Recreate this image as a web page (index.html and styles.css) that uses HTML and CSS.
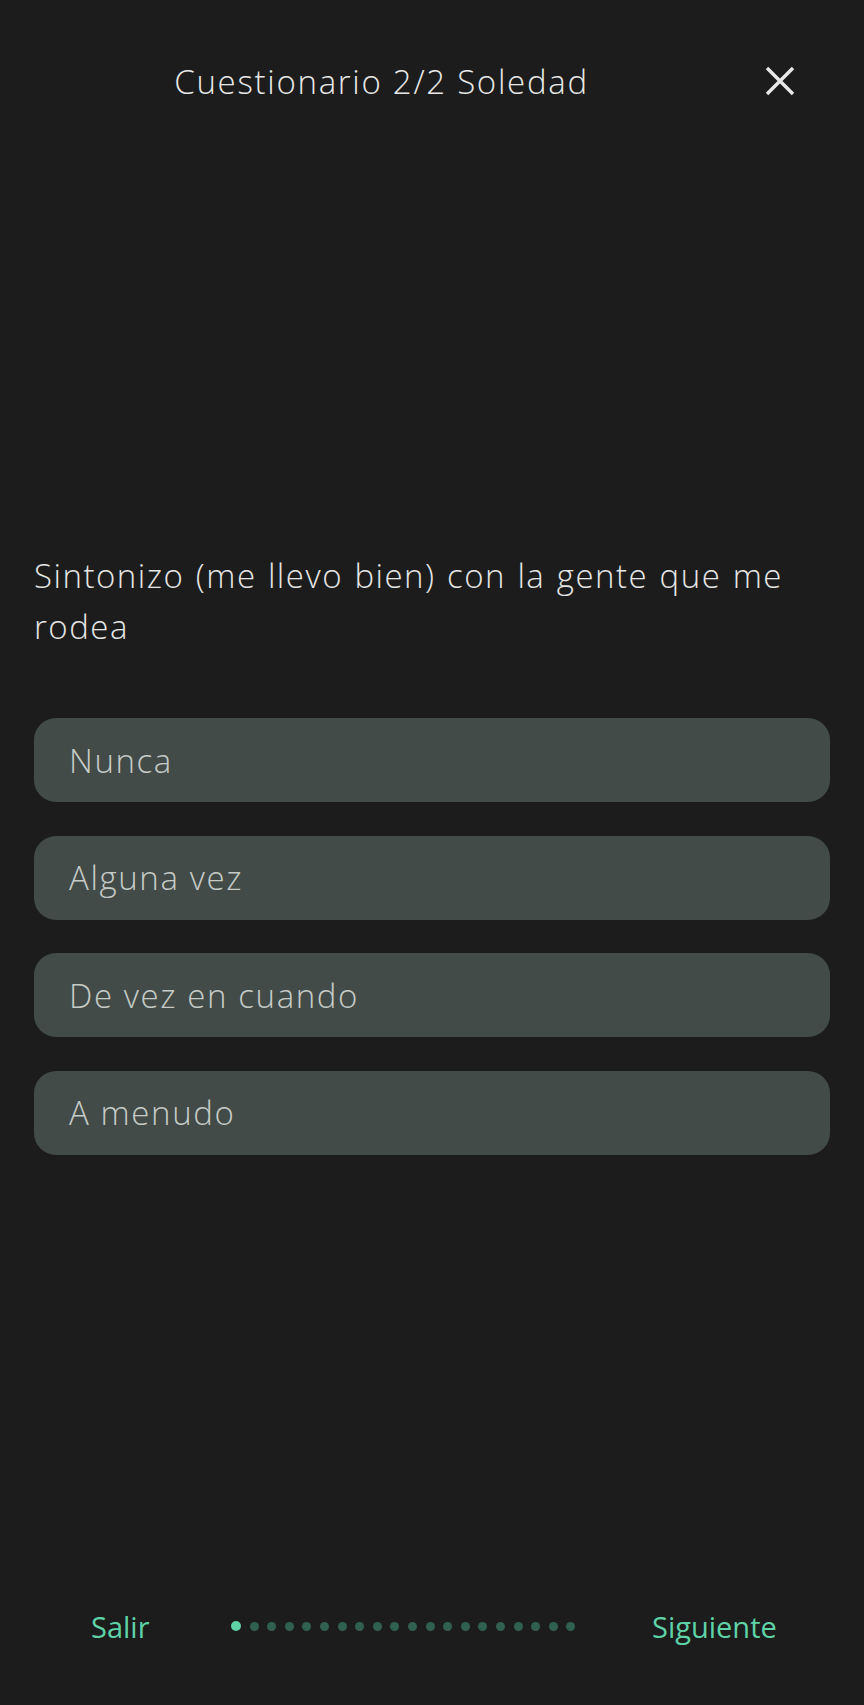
FILE: index.html
```html
<!DOCTYPE html>
<html lang="es">
<head>
<meta charset="utf-8">
<title>Cuestionario 2/2 Soledad</title>
<link rel="stylesheet" href="styles.css">
</head>
<body>
<div class="screen">
  <header class="header">
    <h1 class="title">Cuestionario 2/2 Soledad</h1>
    <button class="close" aria-label="Cerrar">
      <svg width="30" height="30" viewBox="0 0 30 30"><path d="M2 2 L28 28 M28 2 L2 28" stroke="#e8e8e8" stroke-width="3.4" fill="none"/></svg>
    </button>
  </header>

  <p class="question">Sintonizo (me llevo bien) con la gente que me rodea</p>

  <div class="options">
    <div class="option">Nunca</div>
    <div class="option">Alguna vez</div>
    <div class="option">De vez en cuando</div>
    <div class="option">A menudo</div>
  </div>

  <div class="spacer"></div>

  <footer class="footer">
    <span class="link">Salir</span>
    <div class="dots">
      <span class="dot active"></span><span class="dot"></span><span class="dot"></span><span class="dot"></span><span class="dot"></span><span class="dot"></span><span class="dot"></span><span class="dot"></span><span class="dot"></span><span class="dot"></span><span class="dot"></span><span class="dot"></span><span class="dot"></span><span class="dot"></span><span class="dot"></span><span class="dot"></span><span class="dot"></span><span class="dot"></span><span class="dot"></span><span class="dot"></span>
    </div>
    <span class="link">Siguiente</span>
  </footer>
</div>
</body>
</html>
```

FILE: styles.css
```css
* { box-sizing: border-box; }
html, body {
  margin: 0;
  padding: 0;
  background: #1b1c1b;
}
body {
  font-family: "Open Sans", "Noto Sans", sans-serif;
  font-weight: 300;
}
.screen {
  width: 864px;
  min-height: 1705px;
  display: flex;
  flex-direction: column;
}
.header {
  height: 162px;
  display: flex;
  align-items: center;
  padding-right: 69px;
}
.title {
  flex: 1;
  margin: 0;
  text-align: center;
  font-size: 33px;
  font-weight: 300;
  color: #e8e8e8;
  letter-spacing: 1.7px;
}
.close {
  width: 30px;
  height: 30px;
  margin-left: 2px;
  padding: 0;
  border: 0;
  background: none;
  display: flex;
}
.question {
  margin: 388px 81px 0 34px;
  font-size: 33px;
  line-height: 51px;
  color: #e6e6e6;
  text-align: justify;
  letter-spacing: 1.5px;
}
.options {
  margin: 66px 34px 0 34px;
  display: flex;
  flex-direction: column;
  gap: 33.5px;
}
.option {
  height: 84px;
  border-radius: 22px;
  background: #424b47;
  display: flex;
  align-items: center;
  padding-left: 35px;
  font-size: 33px;
  color: #c6cbc7;
  letter-spacing: 1.6px;
}
.spacer { flex: 1; }
.footer {
  height: 158px;
  display: grid;
  grid-template-columns: 140px 1fr 212px;
  align-items: center;
  padding-left: 91px;
}
.link {
  font-size: 29px;
  color: #5fd3a8;
  font-weight: 400;
}
.dots {
  display: flex;
  align-items: center;
  gap: 8.6px;
}
.dot {
  width: 9px;
  height: 9px;
  border-radius: 50%;
  background: #30604f;
}
.dot.active {
  background: #5fd3a8;
  width: 10px;
  height: 10px;
}
```
